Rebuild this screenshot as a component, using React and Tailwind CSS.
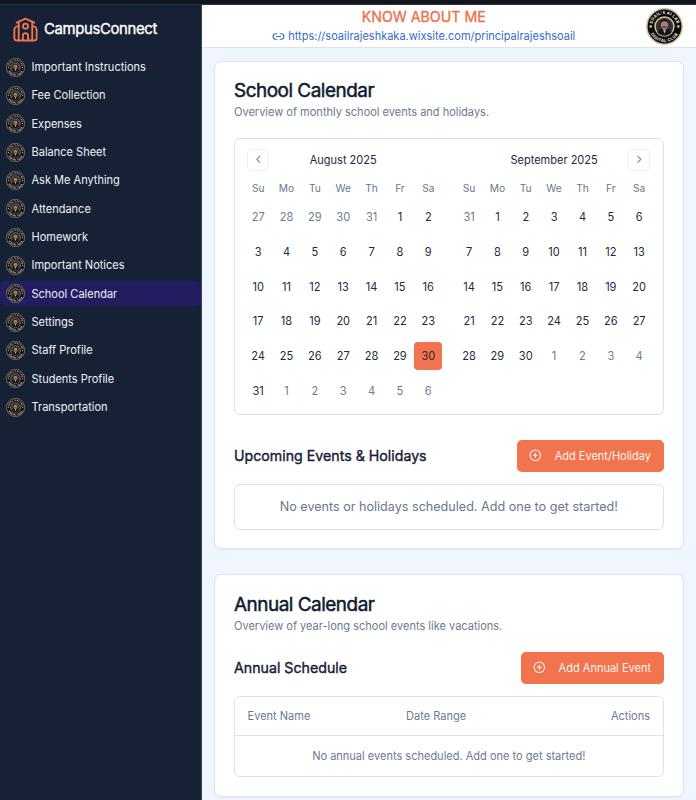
import React from 'react';
import { ChevronLeft, ChevronRight, CirclePlus, Link2 } from 'lucide-react';

const menuItems = [
  'Important Instructions',
  'Fee Collection',
  'Expenses',
  'Balance Sheet',
  'Ask Me Anything',
  'Attendance',
  'Homework',
  'Important Notices',
  'School Calendar',
  'Settings',
  'Staff Profile',
  'Students Profile',
  'Transportation',
];

const weekDays = ['Su', 'Mo', 'Tu', 'We', 'Th', 'Fr', 'Sa'];

function SchoolIcon() {
  return (
    <svg viewBox="0 0 24 24" className="h-[25px] w-[25px] shrink-0" fill="none" stroke="#f1744e" strokeWidth="1.8" strokeLinecap="round" strokeLinejoin="round">
      <path d="M3.5 5.300 12 1.500l8.500 3.800" />
      <path d="M5.500 4.500V22.500M18.500 4.500V22.500" />
      <path d="M5.500 9H4.500a3.200 3.200 0 0 0-3.200 3.200v8.300a2 2 0 0 0 2 2h17.400a2 2 0 0 0 2-2v-8.300a3.200 3.200 0 0 0-3.200-3.200h-1" />
      <path d="M9.500 22v-4a2.500 2.500 0 0 1 5 0v4" />
      <circle cx="12" cy="8.800" r="2.400" />
    </svg>
  );
}

// Round club emblem, shown in the header and next to every menu entry
function Emblem({ id, className, ring = '#d3c18f' }) {
  return (
    <svg viewBox="0 0 36 36" className={className}>
      <defs>
        <path id={`${id}-top`} d="M5.800 18a12.200 12.200 0 0 1 24.400 0" />
        <path id={`${id}-bottom`} d="M2.800 18a15.200 15.200 0 0 0 30.400 0" />
      </defs>
      <circle cx="18" cy="18" r="17.200" fill="#0b0a0a" stroke={ring} strokeWidth="1.500" />
      <circle cx="18" cy="18" r="9.200" fill="#34303a" stroke={ring} strokeWidth="1.500" />
      <path d="M11 23.500c1.500-3 4-3.500 7-3.500s5.500.5 7 3.500a8.800 8.800 0 0 1-14 0z" fill="#15141d" />
      <path d="m16.500 21 1.500 4 1.500-4z" fill="#b5b0bd" />
      <ellipse cx="18" cy="16.500" rx="3.500" ry="4.700" fill="#a77d70" />
      <path d="M14.200 15.500c-.3-5.800 7.900-5.800 7.600 0-1-2-1.500-2.500-3.800-2.500s-2.800.5-3.800 2.500z" fill="#100e12" />
      <path d="M16 18.500h4" stroke="#2a1c1c" strokeWidth="1" />
      <circle cx="4.600" cy="18" r="1.400" fill="#aaa9a5" />
      <circle cx="31.400" cy="18" r="1.400" fill="#aaa9a5" />
      <text fontSize="4" fontWeight="700" fill="#eeeeea" textAnchor="middle" letterSpacing=".25">
        <textPath href={`#${id}-top`} startOffset="50%">SOAIL'S AI LAB</textPath>
      </text>
      <text fontSize="4" fontWeight="700" fill="#eeeeea" textAnchor="middle" letterSpacing=".4">
        <textPath href={`#${id}-bottom`} startOffset="50%">DIGITAL CLUB</textPath>
      </text>
    </svg>
  );
}

function SideBar() {
  return (
    <aside className="h-full w-[201.500px] shrink-0 border-r border-[#3b4760] bg-[#172135] text-[#eef2f8]">
      <div className="flex h-[48px] items-center gap-1.5 pl-[13px]">
        <SchoolIcon />
        <span className="text-[14.900px] tracking-[-0.35px] text-white [-webkit-text-stroke:0.35px]">CampusConnect</span>
      </div>
      <nav>
        {menuItems.map((item, i) => (
          <div key={item} className="h-[28.33px] py-[1.5px]">
            <a
              className={`flex h-[25.33px] items-center gap-[6.500px] rounded-[5px] pl-[6px] text-[11.02px] ${
                item === 'School Calendar' ? 'bg-[#211d60]' : ''
              }`}
            >
              <Emblem id={`menu-${i}`} ring="#948767" className="h-[19px] w-[19px] shrink-0" />
              {item}
            </a>
          </div>
        ))}
      </nav>
    </aside>
  );
}

function Header() {
  return (
    <header className="flex h-[43px] shrink-0 items-center border-b border-[#dce3ea] bg-white pr-[13px]">
      <div className="flex flex-1 flex-col items-center">
        <h2 className="text-[14.200px] leading-[20px] text-[#e7764f] [-webkit-text-stroke:0.4px]">KNOW ABOUT ME</h2>
        <a className="flex items-center gap-[3px] text-[11.02px] leading-[19px] text-[#376bc9]">
          <Link2 size={13} strokeWidth={2} />
          https://soailrajeshkaka.wixsite.com/principalrajeshsoail
        </a>
      </div>
      <Emblem id="header" className="h-[37px] w-[37px]" />
    </header>
  );
}

function Month({ title, start, previous, count, trailing, today, side }) {
  const days = [];
  for (let i = start; i <= previous; i++) days.push({ n: i, outside: true });
  for (let i = 1; i <= count; i++) days.push({ n: i });
  for (let i = 1; i <= trailing; i++) days.push({ n: i, outside: true });

  return (
    <div className="w-[198.450px]">
      <div className="flex h-[22px] items-center px-[3px] text-[11.02px]">
        <span className="w-[22px]">
          {side === 'left' && (
            <button className="flex h-[22px] w-[22px] items-center justify-center rounded-[4px] border border-[#eff2f5] text-[#7f858e]">
              <ChevronLeft size={12.6} />
            </button>
          )}
        </span>
        <span className="flex-1 text-center">{title}</span>
        <span className="w-[22px]">
          {side === 'right' && (
            <button className="flex h-[22px] w-[22px] items-center justify-center rounded-[4px] border border-[#eff2f5] text-[#7f858e]">
              <ChevronRight size={12.6} />
            </button>
          )}
        </span>
      </div>
      <div className="mt-[10px] grid grid-cols-7 text-center text-[10.2px] leading-[14px] text-[#68788d]">
        {weekDays.map((day) => (
          <span key={day}>{day}</span>
        ))}
      </div>
      <div className="mt-[8.800px] grid grid-cols-7 gap-y-[6.300px] text-[11.02px]">
        {days.map((day, i) => (
          <span
            key={i}
            className={`flex h-[28.350px] items-center justify-center rounded-[4px] ${
              day.outside ? 'text-[#6b7a8f]' : day.n === today ? 'bg-[#f1744e] text-[#252a36]' : 'text-[#1e293b]'
            }`}
          >
            {day.n}
          </span>
        ))}
      </div>
    </div>
  );
}

function AddButton({ children }) {
  return (
    <button className="flex h-[31.500px] items-center gap-[12.600px] rounded-[4.700px] bg-[#f1744e] px-[12.600px] text-[11.02px] text-[#fff4ef]">
      <CirclePlus size={12.6} strokeWidth={2} />
      {children}
    </button>
  );
}

function App() {
  return (
    <div className="flex h-[800px] w-[696px] flex-col overflow-hidden bg-[#eff6ff] font-['Inter',sans-serif] leading-[16px] text-[#1e293b]">
      <div className="h-[5px] shrink-0 border-b border-[#2b3039] bg-[#10151e]" />
      <div className="flex min-h-0 flex-1">
        <SideBar />
        <div className="flex min-w-0 flex-1 flex-col">
          <Header />
          <main className="pt-[12.500px] pr-[12.400px] pl-[12.500px]">
            <section className="h-[488.500px] rounded-[7px] border border-[#dce3eb] bg-white px-[19px] pt-[18.500px] shadow-xs">
              <h1 className="text-[18.900px] leading-[22px] tracking-[-0.47px] text-[#101b2e] [-webkit-text-stroke:0.5px]">School Calendar</h1>
              <p className="mt-[2px] text-[11.02px] text-[#6b7a8f]">Overview of monthly school events and holidays.</p>
              <div className="mt-[18px] flex h-[276.500px] justify-between rounded-[6px] border border-[#dce3eb] pt-[9.500px] pr-[9.300px] pl-[9px]">
                <Month title="August 2025" start={27} previous={31} count={31} trailing={6} today={30} side="left" />
                <Month title="September 2025" start={31} previous={31} count={30} trailing={4} side="right" />
              </div>
              <div className="mt-[25.500px] flex items-center justify-between">
                <h3 className="text-[14.200px] text-[#172135] [-webkit-text-stroke:0.4px]">Upcoming Events &amp; Holidays</h3>
                <AddButton>Add Event/Holiday</AddButton>
              </div>
              <div className="mt-[12.500px] flex h-[46px] items-center justify-center rounded-[6px] border border-[#dce3eb] text-[12.600px] text-[#68788d]">
                No events or holidays scheduled. Add one to get started!
              </div>
            </section>

            <section className="mt-[25px] h-[223px] rounded-[7px] border border-[#dce3eb] bg-white px-[19px] pt-[18.500px] shadow-xs">
              <h1 className="text-[18.900px] leading-[22px] tracking-[-0.47px] text-[#101b2e] [-webkit-text-stroke:0.5px]">Annual Calendar</h1>
              <p className="mt-[2px] text-[11.02px] text-[#6b7a8f]">Overview of year-long school events like vacations.</p>
              <div className="mt-[18.500px] flex items-center justify-between">
                <h3 className="text-[14.200px] text-[#172135] [-webkit-text-stroke:0.4px]">Annual Schedule</h3>
                <AddButton>Add Annual Event</AddButton>
              </div>
              <div className="mt-[12.500px] h-[81px] rounded-[6px] border border-[#dce3eb] text-[11.02px] text-[#6b7a8f]">
                <div className="flex h-[38.500px] items-center border-b border-[#dce3eb] px-[12.600px]">
                  <span className="w-[158.500px]">Event Name</span>
                  <span className="flex-1">Date Range</span>
                  <span>Actions</span>
                </div>
                <div className="flex h-[40px] items-center justify-center">
                  No annual events scheduled. Add one to get started!
                </div>
              </div>
            </section>
          </main>
        </div>
      </div>
    </div>
  );
}

export default App;
